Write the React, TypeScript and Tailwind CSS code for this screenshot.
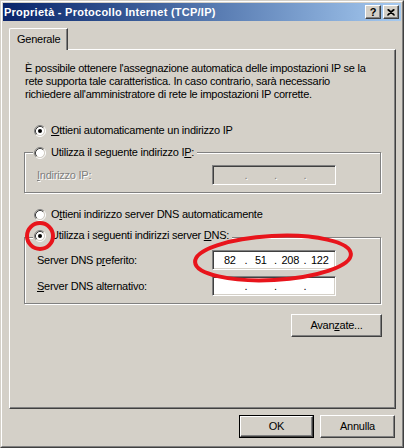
import type { ReactNode } from "react";

function Radio({ checked }: { checked?: boolean }) {
  return (
    <svg width="12" height="12" viewBox="0 0 12 12" className="shrink-0">
      <circle cx="6" cy="6" r="4.2" fill="#fff" />
      <path d="M2.11 9.89 A5.5 5.5 0 0 1 9.89 2.11" fill="none" stroke="#808080" />
      <path d="M9.89 2.11 A5.5 5.5 0 0 1 2.11 9.89" fill="none" stroke="#fff" />
      <path d="M2.82 9.18 A4.5 4.5 0 0 1 9.18 2.82" fill="none" stroke="#404040" />
      <path d="M9.18 2.82 A4.5 4.5 0 0 1 2.82 9.18" fill="none" stroke="#D4D0C8" />
      {checked && <circle cx="6" cy="6" r="2" fill="#000" />}
    </svg>
  );
}

function RadioRow({ checked, children }: { checked?: boolean; children: ReactNode }) {
  return (
    <div className="flex h-[13px] items-center gap-[5px]">
      <Radio checked={checked} />
      <span className="whitespace-nowrap">{children}</span>
    </div>
  );
}

function IpBox({ values, disabled }: { values?: string[]; disabled?: boolean }) {
  const fields = values ?? ["", "", "", ""];
  return (
    <div
      className={
        "flex h-[20px] w-[124px] items-center border border-t-[#808080] border-l-[#808080] border-r-white border-b-white px-[2px] shadow-[inset_1px_1px_0_#404040,inset_-1px_-1px_0_#D4D0C8] " +
        (disabled ? "bg-[#D4D0C8] text-[#808080] [text-shadow:1px_1px_0_#fff]" : "bg-white text-black")
      }
    >
      {fields.map((v, i) => (
        <div key={i} className="flex flex-1 items-center">
          {i > 0 && <span className="w-[3px]">.</span>}
          <span className="flex-1 text-center">{v}</span>
        </div>
      ))}
    </div>
  );
}

function Button({ children, isDefault, className }: { children: ReactNode; isDefault?: boolean; className?: string }) {
  const inner = (
    <div className="flex h-full w-full items-center justify-center border border-t-white border-l-white border-r-[#404040] border-b-[#404040] bg-[#D4D0C8] shadow-[inset_-1px_-1px_0_#808080]">
      {children}
    </div>
  );
  return (
    <div className={"h-[23px] " + (isDefault ? "border border-black " : "") + (className ?? "")}>{inner}</div>
  );
}

function CaptionButton({ children }: { children: ReactNode }) {
  return (
    <div className="flex h-[14px] w-[16px] items-center justify-center border border-t-white border-l-white border-r-[#404040] border-b-[#404040] bg-[#D4D0C8] shadow-[inset_-1px_-1px_0_#808080]">
      {children}
    </div>
  );
}

export default function App() {
  return (
    <div className="relative h-[448px] w-[404px] border border-t-[#D4D0C8] border-l-[#D4D0C8] border-r-[#404040] border-b-[#404040] bg-[#D4D0C8] font-['Liberation_Sans',Arial,sans-serif] text-[11px] leading-[13px] tracking-[-0.25px] text-black">
      <div className="flex h-full flex-col border border-t-white border-l-white border-r-[#808080] border-b-[#808080] p-[1px]">
        {/* title bar */}
        <div className="flex h-[18px] items-center bg-gradient-to-r from-[#0A246A] to-[#A6CAF0] pl-[1px] pr-[2px]">
          <span className="font-bold tracking-[0.25px] text-white">Proprietà - Protocollo Internet (TCP/IP)</span>
          <div className="ml-auto flex gap-[2px]">
            <CaptionButton>
              <span className="font-bold leading-[10px] tracking-normal">?</span>
            </CaptionButton>
            <CaptionButton>
              <svg width="8" height="7" viewBox="0 0 8 7">
                <path d="M0.5 0.5 L7.5 6.5 M1.5 0.5 L7.5 5.8 M7.5 0.5 L0.5 6.5 M6.5 0.5 L0.5 5.8" stroke="#000" strokeWidth="1.1" />
              </svg>
            </CaptionButton>
          </div>
        </div>

        <div className="flex flex-1 flex-col pl-[6px] pt-[7px]">
          {/* tab */}
          <div className="relative z-10 -mb-[1px] flex h-[22px] w-[59px] items-start rounded-tl-[2px] border-l border-t border-r border-l-white border-t-white border-r-[#404040] bg-[#D4D0C8] pl-[7px] pt-[4px] shadow-[inset_-1px_0_0_#808080]">
            Generale
          </div>

          {/* tab page */}
          <div className="flex h-[360px] w-[387px] flex-col border border-t-white border-l-white border-r-[#404040] border-b-[#404040] pl-[14px] shadow-[inset_-1px_-1px_0_#808080]">
            <p className="ml-[1px] mt-[12px] w-[350px]">
              È possibile ottenere l'assegnazione automatica delle impostazioni IP se la rete supporta tale caratteristica. In caso contrario, sarà necessario richiedere all'amministratore di rete le impostazioni IP corrette.
            </p>

            <div className="ml-[10px] mt-[23px]">
              <RadioRow checked>
                <span className="underline">O</span>ttieni automaticamente un indirizzo IP
              </RadioRow>
            </div>

            <div className="mt-[15px] flex w-[357px] flex-col border border-[#808080] pb-[7px] shadow-[1px_1px_0_#fff,inset_1px_1px_0_#fff]">
              <div className="-mt-[7px] ml-[8px] self-start bg-[#D4D0C8] pl-[1px] pr-[3px]">
                <RadioRow>
                  Utilizza il seguente indirizzo I<span className="underline">P</span>:
                </RadioRow>
              </div>
              <div className="mt-[6px] flex items-center">
                <span className="w-[187px] pl-[12px] text-[#808080] [text-shadow:1px_1px_0_#fff]">
                  <span className="underline">I</span>ndirizzo IP:
                </span>
                <IpBox disabled />
              </div>
            </div>

            <div className="ml-[10px] mt-[15px]">
              <RadioRow>
                O<span className="underline">t</span>tieni indirizzo server DNS automaticamente
              </RadioRow>
            </div>

            <div className="mt-[16px] flex w-[357px] flex-col border border-[#808080] pb-[7px] shadow-[1px_1px_0_#fff,inset_1px_1px_0_#fff]">
              <div className="-mt-[9px] ml-[8px] self-start bg-[#D4D0C8] pl-[1px] pr-[3px]">
                <RadioRow checked>
                  Utilizza i seguenti indirizzi server <span className="underline">D</span>NS:
                </RadioRow>
              </div>
              <div className="mt-[8px] flex items-center">
                <span className="w-[187px] pl-[12px]">
                  Server DNS p<span className="underline">r</span>eferito:
                </span>
                <IpBox values={["82", "51", "208", "122"]} />
              </div>
              <div className="mt-[6px] flex items-center">
                <span className="w-[187px] pl-[12px]">
                  <span className="underline">S</span>erver DNS alternativo:
                </span>
                <IpBox />
              </div>
            </div>

            <Button className="ml-[267px] mt-[10px] w-[91px]">
              Avan<span className="underline">z</span>ate...
            </Button>
          </div>

          {/* dialog buttons */}
          <div className="mt-[6px] flex justify-end gap-[6px] pr-[6px]">
            <Button isDefault className="w-[75px]">OK</Button>
            <Button className="w-[75px]">Annulla</Button>
          </div>
        </div>
      </div>

      {/* red annotations drawn over the screenshot */}
      <svg width="404" height="448" className="pointer-events-none absolute left-[-1px] top-[-1px]">
        <circle cx="40" cy="236" r="13" fill="none" stroke="#E8141B" strokeWidth="4" />
        <ellipse cx="273" cy="258" rx="78" ry="22" fill="none" stroke="#E8141B" strokeWidth="4" transform="rotate(-3 273 258)" />
      </svg>
    </div>
  );
}
